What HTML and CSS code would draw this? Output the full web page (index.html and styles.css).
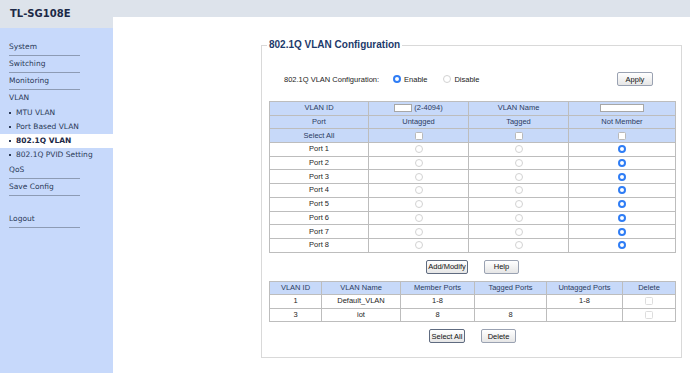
FILE: index.html
```html
<!DOCTYPE html>
<html lang="en">
<head>
    <meta charset="UTF-8">
    <meta name="viewport" content="width=device-width, initial-scale=1.0">
    <title>TL-SG108E - 802.1Q VLAN</title>
    <link rel="stylesheet" href="styles.css">
</head>
<body>
    <div class="sidebar">
        <div class="logo">TL-SG108E</div>
        <nav class="menu">
            <a class="item">System</a>
            <a class="item">Switching</a>
            <a class="item">Monitoring</a>
            <div class="group">VLAN</div>
            <a class="sub">MTU VLAN</a>
            <a class="sub">Port Based VLAN</a>
            <a class="sub active">802.1Q VLAN</a>
            <a class="sub">802.1Q PVID Setting</a>
            <a class="item">QoS</a>
            <a class="item">Save Config</a>
            <a class="item logout">Logout</a>
        </nav>
    </div>

    <div class="main">
        <div class="topbar"></div>

        <fieldset class="panel">
            <legend>802.1Q VLAN Configuration</legend>

            <div class="config-row">
                <span class="config-label">802.1Q VLAN Configuration:</span>
                <span class="radio on"></span><span class="opt">Enable</span>
                <span class="radio"></span><span class="opt">Disable</span>
                <button class="btn apply">Apply</button>
            </div>

            <table class="grid ports">
                <colgroup>
                    <col style="width:99px"><col style="width:100px"><col style="width:100px"><col style="width:107px">
                </colgroup>
                <tr class="head">
                    <td>VLAN ID</td>
                    <td><input class="field vid" type="text"> (2-4094)</td>
                    <td>VLAN Name</td>
                    <td><input class="field vname" type="text"></td>
                </tr>
                <tr class="head">
                    <td>Port</td><td>Untagged</td><td>Tagged</td><td>Not Member</td>
                </tr>
                <tr class="head">
                    <td>Select All</td>
                    <td><span class="check"></span></td>
                    <td><span class="check"></span></td>
                    <td><span class="check"></span></td>
                </tr>
                <tr><td>Port 1</td><td><span class="radio"></span></td><td><span class="radio"></span></td><td><span class="radio on"></span></td></tr>
                <tr><td>Port 2</td><td><span class="radio"></span></td><td><span class="radio"></span></td><td><span class="radio on"></span></td></tr>
                <tr><td>Port 3</td><td><span class="radio"></span></td><td><span class="radio"></span></td><td><span class="radio on"></span></td></tr>
                <tr><td>Port 4</td><td><span class="radio"></span></td><td><span class="radio"></span></td><td><span class="radio on"></span></td></tr>
                <tr><td>Port 5</td><td><span class="radio"></span></td><td><span class="radio"></span></td><td><span class="radio on"></span></td></tr>
                <tr><td>Port 6</td><td><span class="radio"></span></td><td><span class="radio"></span></td><td><span class="radio on"></span></td></tr>
                <tr><td>Port 7</td><td><span class="radio"></span></td><td><span class="radio"></span></td><td><span class="radio on"></span></td></tr>
                <tr><td>Port 8</td><td><span class="radio"></span></td><td><span class="radio"></span></td><td><span class="radio on"></span></td></tr>
            </table>

            <div class="buttons">
                <button class="btn strong add">Add/Modify</button>
                <button class="btn help">Help</button>
            </div>

            <table class="grid vlans">
                <colgroup>
                    <col style="width:52px"><col style="width:79px"><col style="width:74px"><col style="width:72px"><col style="width:76px"><col style="width:53px">
                </colgroup>
                <tr class="head">
                    <td>VLAN ID</td><td>VLAN Name</td><td>Member Ports</td><td>Tagged Ports</td><td>Untagged Ports</td><td>Delete</td>
                </tr>
                <tr>
                    <td>1</td><td>Default_VLAN</td><td>1-8</td><td></td><td>1-8</td><td><span class="check faint"></span></td>
                </tr>
                <tr>
                    <td>3</td><td>iot</td><td>8</td><td>8</td><td></td><td><span class="check faint"></span></td>
                </tr>
            </table>

            <div class="buttons bottom">
                <button class="btn strong selall">Select All</button>
                <button class="btn del">Delete</button>
            </div>
        </fieldset>
    </div>
</body>
</html>
```

FILE: styles.css
```css
html, body {
    margin: 0;
    height: 100%;
}

body {
    display: flex;
    overflow: hidden;
    background: #ffffff;
}

/* left menu */
.sidebar {
    width: 113px;
    flex: none;
    background-color: #c7d9fb;
    font-family: "DejaVu Sans", Verdana, sans-serif;
    font-size: 7.5px;
    color: #2b3a58;
}

.logo {
    height: 28px;
    line-height: 28px;
    padding-left: 10px;
    background-color: #dde3eb;
    font-size: 10px;
    font-weight: bold;
    color: #1c2947;
}

.menu {
    padding-top: 11px;
}

.item {
    display: block;
    width: 71px;
    margin-left: 9px;
    line-height: 16px;
    border-bottom: 1px solid #8d9bb4;
}

.logout {
    margin-top: 15px;
}

.group {
    padding-left: 9px;
    line-height: 16px;
}

.sub {
    display: block;
    line-height: 14px;
    padding-left: 16px;
    position: relative;
}

.sub::before {
    content: "";
    position: absolute;
    left: 9px;
    top: 6px;
    width: 2px;
    height: 2px;
    background-color: #2b3a58;
}

.sub.active {
    background-color: #ffffff;
    font-weight: bold;
    color: #1c2947;
}

/* content */
.main {
    flex: 1;
    font-family: "Liberation Sans", Arial, sans-serif;
    font-size: 7.5px;
    color: #222222;
}

.topbar {
    height: 17px;
    background-color: #dde3eb;
}

.panel {
    box-sizing: border-box;
    width: 420px;
    margin: 22px 0 0 148px;
    padding: 0 5px 14px 7px;
    border: 1px solid #d9d9d9;
}

.panel legend {
    padding: 0 2px;
    margin-left: -2px;
    font-size: 10px;
    line-height: 12px;
    font-weight: bold;
    color: #1d3a6b;
}

.config-row {
    display: flex;
    align-items: center;
    height: 14px;
    margin-top: 21px;
    padding: 0 23px 0 15px;
}

.config-label {
    margin-right: 14px;
}

.opt {
    margin: 0 16px 0 3px;
}

.apply {
    margin-left: auto;
    width: 36px;
}

/* radios and checkboxes */
.radio {
    display: inline-block;
    box-sizing: border-box;
    width: 8px;
    height: 8px;
    border: 1px solid #d2d2d2;
    border-radius: 50%;
    background-color: #ffffff;
    vertical-align: middle;
}

.radio.on {
    border: 2.5px solid #2f7df5;
    background-color: #ffffff;
}

.check {
    display: inline-block;
    box-sizing: border-box;
    width: 8px;
    height: 8px;
    border: 1px solid #b9b9b9;
    border-radius: 1.5px;
    background-color: #ffffff;
    vertical-align: middle;
}

.check.faint {
    border-color: #dddddd;
}

/* tables */
.grid {
    width: 406px;
    table-layout: fixed;
    border-collapse: collapse;
}

.grid td {
    height: 12.7px;
    padding: 0;
    border: 1px solid #bdbdbd;
    text-align: center;
    line-height: 10px;
    color: #1e1e1e;
}

.grid tr.head td {
    background-color: #c7d9f9;
    color: #2b3b62;
}

.ports {
    margin-top: 15px;
}

.vlans td {
    height: 12.6px;
}

.field {
    box-sizing: border-box;
    height: 8px;
    padding: 0;
    margin: 0;
    border: 1px solid #a7a7a7;
    background-color: #ffffff;
    vertical-align: middle;
}

.vid {
    width: 18px;
}

.vname {
    width: 44px;
}

/* buttons */
.buttons {
    display: flex;
    justify-content: center;
    gap: 16px;
    margin: 7px 0 7px;
}

.buttons.bottom {
    margin: 7px 0 0;
}

.btn {
    box-sizing: border-box;
    height: 14px;
    padding: 0;
    font-family: "Liberation Sans", Arial, sans-serif;
    font-size: 7.5px;
    color: #111111;
    border: 1px solid #9aa2b2;
    border-radius: 2px;
    background: linear-gradient(#ffffff, #e6e6e6);
}

.btn.strong {
    border-color: #5f6b80;
}

.add {
    width: 42px;
}

.help {
    width: 35px;
}

.selall {
    width: 36px;
}

.del {
    width: 35px;
}
```
